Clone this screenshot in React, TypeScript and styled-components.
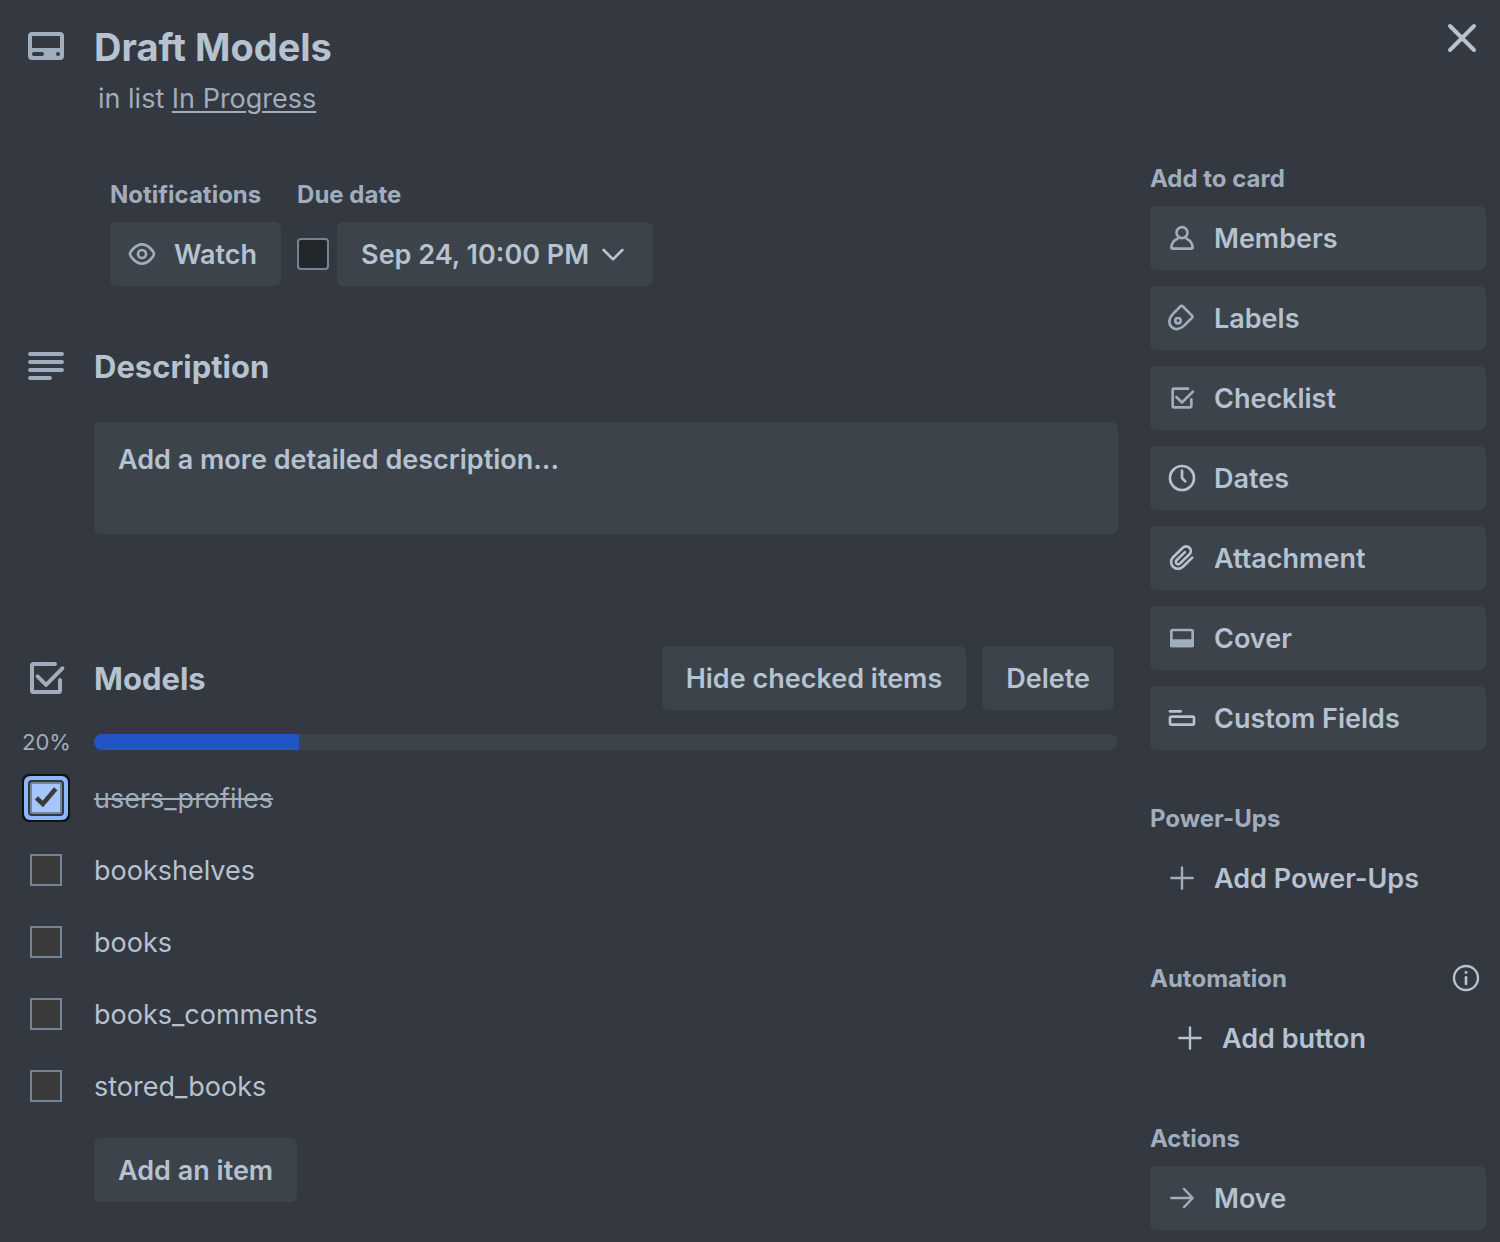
import React, { useState } from 'react';
import styled, { createGlobalStyle, css } from 'styled-components';

const color = {
  surface: '#343840',
  raised: '#3c434a',
  text: '#b6c2cf',
  subtle: '#9fadbc',
  border: '#738496',
  input: '#22272b',
  item: '#3b3b3b',
  checked: '#a4c6fb',
  ring: '#8fb5fb',
  progress: '#2354c7',
};

const GlobalStyle = createGlobalStyle`
  * { box-sizing: border-box; }
  body {
    margin: 0;
    background: ${color.surface};
    color: ${color.text};
    font-family: Inter, "Liberation Sans", sans-serif;
    font-size: 27px;
    line-height: 40px;
  }
  h1, h2, h3, p, ul { margin: 0; padding: 0; }
  ul { list-style: none; }
  button { font: inherit; color: inherit; border: 0; background: none; cursor: pointer; }
`;

const Icon = styled.svg.attrs({
  viewBox: '0 0 24 24',
  fill: 'none',
  stroke: 'currentColor',
  strokeWidth: 2,
  strokeLinecap: 'round',
  strokeLinejoin: 'round',
  'aria-hidden': true,
})<{ $size?: number; $bright?: boolean }>`
  display: block;
  flex: none;
  width: ${(p) => p.$size ?? 32}px;
  height: ${(p) => p.$size ?? 32}px;
  color: ${(p) => (p.$bright ? color.text : color.subtle)};
`;

const Header = styled.header`
  display: flex;
  align-items: flex-start;
  gap: 24px;
  padding: 14px 14px 0 22px;
`;

const CardIcon = styled.div`
  padding-top: 8px;
`;

const Heading = styled.div`
  flex: 1;
  padding-top: 8px;
`;

const Title = styled.h1`
  font-size: 38px;
  line-height: 50px;
  font-weight: 700;
`;

const ListLine = styled.p`
  margin: 6px 0 0 4px;
  line-height: 42px;
  color: ${color.subtle};
`;

const ListLink = styled.a`
  color: inherit;
  text-decoration: underline;
  text-decoration-thickness: 2px;
  text-underline-offset: 3px;
`;

const CloseButton = styled.button`
  padding: 0;
`;

const Body = styled.div`
  display: grid;
  grid-template-columns: minmax(0, 1fr) 336px;
  gap: 32px;
  padding: 42px 14px 12px 22px;
`;

const Main = styled.main`
  padding-top: 16px;
`;

const Badges = styled.div`
  display: flex;
  gap: 16px;
  padding-left: 88px;
`;

const Label = styled.h3`
  font-size: 24px;
  line-height: 34px;
  font-weight: 700;
  color: ${color.subtle};
  margin-bottom: 10px;
`;

const Controls = styled.div`
  display: flex;
  align-items: center;
  gap: 8px;
`;

const Button = styled.button<{ $icon?: boolean }>`
  display: flex;
  align-items: center;
  gap: ${(p) => (p.$icon ? 16 : 8)}px;
  height: 64px;
  padding: 0 24px 0 ${(p) => (p.$icon ? 16 : 24)}px;
  border-radius: 6px;
  background: ${color.raised};
  font-weight: 600;
  white-space: nowrap;
`;

const Caption = styled.span`
  padding-top: 2px;
`;

const Section = styled.section<{ $space: number }>`
  margin-top: ${(p) => p.$space}px;
`;

const Row = styled.div`
  display: grid;
  grid-template-columns: 48px minmax(0, 1fr);
  column-gap: 24px;
  align-items: center;
`;

const Bar = styled.div`
  display: flex;
  align-items: center;
  gap: 16px;
  padding-right: 4px;
`;

const SectionTitle = styled.h2`
  flex: 1;
  padding-top: 2px;
  font-size: 31px;
  line-height: 46px;
  font-weight: 700;
`;

const Indent = styled.div<{ $space: number }>`
  display: flex;
  padding-left: 72px;
  margin-top: ${(p) => p.$space}px;
`;

const DescriptionButton = styled.button`
  flex: 1;
  display: flex;
  height: 112px;
  padding: 16px 24px;
  border-radius: 6px;
  background: ${color.raised};
  font-weight: 600;
`;

const ProgressRow = styled(Row)`
  margin: 20px 0 8px;
`;

const Percent = styled.span`
  font-size: 22px;
  line-height: 24px;
  color: ${color.subtle};
  text-align: center;
`;

const Track = styled.div`
  height: 16px;
  border-radius: 8px;
  overflow: hidden;
  background: ${color.raised};
`;

const Fill = styled.div`
  height: 100%;
  background: ${color.progress};
`;

const Item = styled(Row).attrs({ as: 'li' })`
  min-height: 72px;
`;

const CheckCell = styled.span`
  display: grid;
  place-items: center;
  > * { grid-area: 1 / 1; }
  svg { pointer-events: none; }
`;

const box = css`
  appearance: none;
  width: 32px;
  height: 32px;
  margin: 0;
  border: 2px solid ${color.border};
`;

const DueCheckbox = styled.input.attrs({ type: 'checkbox' })`
  ${box}
  border-radius: 4px;
  background: ${color.input};
`;

const ItemCheckbox = styled.input.attrs({ type: 'checkbox' })`
  ${box}
  background: ${color.item};
  &:checked {
    border-radius: 2px;
    background: ${color.checked};
    box-shadow: 0 0 0 2px ${color.surface}, 0 0 0 6px ${color.ring}, 0 0 0 8px #101214;
  }
`;

const ItemLabel = styled.label<{ $done: boolean }>`
  padding-top: 2px;
  color: ${(p) => (p.$done ? color.subtle : color.text)};
  text-decoration: ${(p) => (p.$done ? 'line-through' : 'none')};
  text-decoration-thickness: 2px;
`;

const Sidebar = styled.aside`
  display: flex;
  flex-direction: column;
  gap: 52px;
`;

const LabelLine = styled.div`
  display: flex;
  justify-content: space-between;
  padding-right: 4px;
`;

const InfoButton = styled.button`
  height: 32px;
  padding: 0;
`;

const Stack = styled.div`
  display: flex;
  flex-direction: column;
  gap: 16px;
`;

const PlainButton = styled(Button)<{ $inset?: boolean }>`
  background: none;
  margin-left: ${(p) => (p.$inset ? 8 : 0)}px;
`;

const checklistPath = (
  <>
    <path d="M16.5 5H5.8a.8.8 0 0 0-.8.8v12.4a.8.8 0 0 0 .8.8h12.4a.8.8 0 0 0 .8-.8V13" />
    <path d="M7.8 11.2 12 15.4 20.2 7.2" />
  </>
);

const plusPath = <path d="M12 4v16M4 12h16" strokeWidth="1.8" />;

const addActions = [
  {
    name: 'Members',
    art: (
      <>
        <circle cx="12" cy="8" r="4.1" />
        <path d="M8.6 12.5C5.8 13.7 4.1 16.2 4 19.2a.8.8 0 0 0 .8.8h14.4a.8.8 0 0 0 .8-.8c-.1-3-1.8-5.5-4.6-6.7" />
      </>
    ),
  },
  {
    name: 'Labels',
    art: (
      <>
        <path d="M10.9 3.2a1.100 1.100 0 0 1 1.600 0l7 7a1.100 1.100 0 0 1 0 1.600l-6.300 6.300c-3 2.700-6.900 3-9.100.6C1.800 16.300 2 12.300 4.600 9.600z" />
        <circle cx="9" cy="14" r="2" />
      </>
    ),
  },
  { name: 'Checklist', art: checklistPath },
  {
    name: 'Dates',
    bright: true,
    art: (
      <>
        <circle cx="12" cy="12" r="9" />
        <path d="M12 6.500V12l2.500 2.500" />
      </>
    ),
  },
  {
    name: 'Attachment',
    bright: true,
    art: (
      <path d="m19.700 11.700-7 6.900c-2.100 2-5.400 2-7.400 0s-2-5.200 0-7.200l7.300-7.100c1.400-1.400 3.600-1.400 5 0s1.400 3.500 0 4.900l-7.200 7c-.7.700-1.800.7-2.500 0s-.7-1.800 0-2.500l6.300-6.100" />
    ),
  },
  {
    name: 'Cover',
    art: (
      <>
        <rect x="4" y="6" width="16" height="12" rx="1" />
        <path d="M4 14h16v4H4z" fill="currentColor" />
      </>
    ),
  },
  {
    name: 'Custom Fields',
    bright: true,
    art: (
      <>
        <path d="M3 7h8" />
        <rect x="3" y="11" width="18" height="6" rx="1" />
      </>
    ),
  },
];

const initialItems = [
  { name: 'users_profiles', done: true },
  { name: 'bookshelves', done: false },
  { name: 'books', done: false },
  { name: 'books_comments', done: false },
  { name: 'stored_books', done: false },
];

export default function App() {
  const [items, setItems] = useState(initialItems);
  const percent = Math.round((items.filter((i) => i.done).length / items.length) * 100);
  const toggle = (name: string) =>
    setItems(items.map((i) => (i.name === name ? { ...i, done: !i.done } : i)));

  return (
    <>
      <GlobalStyle />
      <Header>
        <CardIcon>
          <Icon $size={48}>
            <path
              fill="currentColor"
              stroke="none"
              fillRule="evenodd"
              d="M5 5h14a2 2 0 0 1 2 2v10a2 2 0 0 1-2 2H5a2 2 0 0 1-2-2V7a2 2 0 0 1 2-2zM5 7v6h14V7zM6 15a1 1 0 0 0 0 2h4a1 1 0 0 0 0-2zM18 15a1 1 0 1 0 0 2 1 1 0 0 0 0-2z"
            />
          </Icon>
        </CardIcon>
        <Heading>
          <Title>Draft Models</Title>
          <ListLine>
            in list <ListLink href="#list">In Progress</ListLink>
          </ListLine>
        </Heading>
        <CloseButton aria-label="Close">
          <Icon $size={48} $bright>
            <path d="m6 6 12 12M18 6 6 18" />
          </Icon>
        </CloseButton>
      </Header>
      <Body>
        <Main>
          <Badges>
            <div>
              <Label>Notifications</Label>
              <Button $icon>
                <Icon>
                  <path d="M3 12c0-1.300 4-7.200 9-7.200s9 5.900 9 7.200-4 7.200-9 7.200S3 13.300 3 12z" />
                  <circle cx="12" cy="12" r="3" />
                </Icon>
                <Caption>Watch</Caption>
              </Button>
            </div>
            <div>
              <Label>Due date</Label>
              <Controls>
                <DueCheckbox aria-label="Mark due date complete" />
                <Button>
                  <Caption>Sep 24, 10:00 PM</Caption>
                  <Icon $bright>
                    <path d="m5 9 7 7 7-7" />
                  </Icon>
                </Button>
              </Controls>
            </div>
          </Badges>

          <Section $space={56}>
            <Row>
              <Icon $size={48}>
                <path d="M4 6h16M4 10h16M4 14h16M4 18h10" />
              </Icon>
              <SectionTitle>Description</SectionTitle>
            </Row>
            <Indent $space={32}>
              <DescriptionButton>
                <Caption>Add a more detailed description...</Caption>
              </DescriptionButton>
            </Indent>
          </Section>

          <Section $space={112}>
            <Row>
              <Icon $size={48}>{checklistPath}</Icon>
              <Bar>
                <SectionTitle>Models</SectionTitle>
                <Button>
                  <Caption>Hide checked items</Caption>
                </Button>
                <Button>
                  <Caption>Delete</Caption>
                </Button>
              </Bar>
            </Row>
            <ProgressRow>
              <Percent>{percent}%</Percent>
              <Track role="progressbar" aria-label="Models" aria-valuenow={percent}>
                <Fill style={{ width: `${percent}%` }} />
              </Track>
            </ProgressRow>
            <ul>
              {items.map((item) => (
                <Item key={item.name}>
                  <CheckCell>
                    <ItemCheckbox
                      id={item.name}
                      checked={item.done}
                      onChange={() => toggle(item.name)}
                    />
                    {item.done && (
                      <Icon>
                        <path
                          d="M4.800 11.900 9.600 16.400 19.300 5"
                          stroke={color.item}
                          strokeWidth="3.400"
                          strokeLinecap="butt"
                          strokeLinejoin="miter"
                        />
                      </Icon>
                    )}
                  </CheckCell>
                  <ItemLabel htmlFor={item.name} $done={item.done}>
                    {item.name}
                  </ItemLabel>
                </Item>
              ))}
            </ul>
            <Indent $space={16}>
              <Button>
                <Caption>Add an item</Caption>
              </Button>
            </Indent>
          </Section>
        </Main>

        <Sidebar>
          <section>
            <Label>Add to card</Label>
            <Stack>
              {addActions.map((action) => (
                <Button key={action.name} $icon>
                  <Icon $bright={action.bright}>{action.art}</Icon>
                  <Caption>{action.name}</Caption>
                </Button>
              ))}
            </Stack>
          </section>
          <section>
            <Label>Power-Ups</Label>
            <PlainButton $icon>
              <Icon>{plusPath}</Icon>
              <Caption>Add Power-Ups</Caption>
            </PlainButton>
          </section>
          <section>
            <LabelLine>
              <Label>Automation</Label>
              <InfoButton aria-label="About automation">
                <Icon $bright>
                  <circle cx="12" cy="12" r="9" strokeWidth="1.800" />
                  <path d="M12 11.500v5" />
                  <circle cx="12" cy="7.800" r="1.100" fill="currentColor" stroke="none" />
                </Icon>
              </InfoButton>
            </LabelLine>
            <PlainButton $icon $inset>
              <Icon $bright>{plusPath}</Icon>
              <Caption>Add button</Caption>
            </PlainButton>
          </section>
          <section>
            <Label>Actions</Label>
            <Stack>
              <Button $icon>
                <Icon>
                  <path d="M4 12h16M13.500 5.200l6.500 6.800-6.500 6.800" strokeWidth="1.800" />
                </Icon>
                <Caption>Move</Caption>
              </Button>
            </Stack>
          </section>
        </Sidebar>
      </Body>
    </>
  );
}
